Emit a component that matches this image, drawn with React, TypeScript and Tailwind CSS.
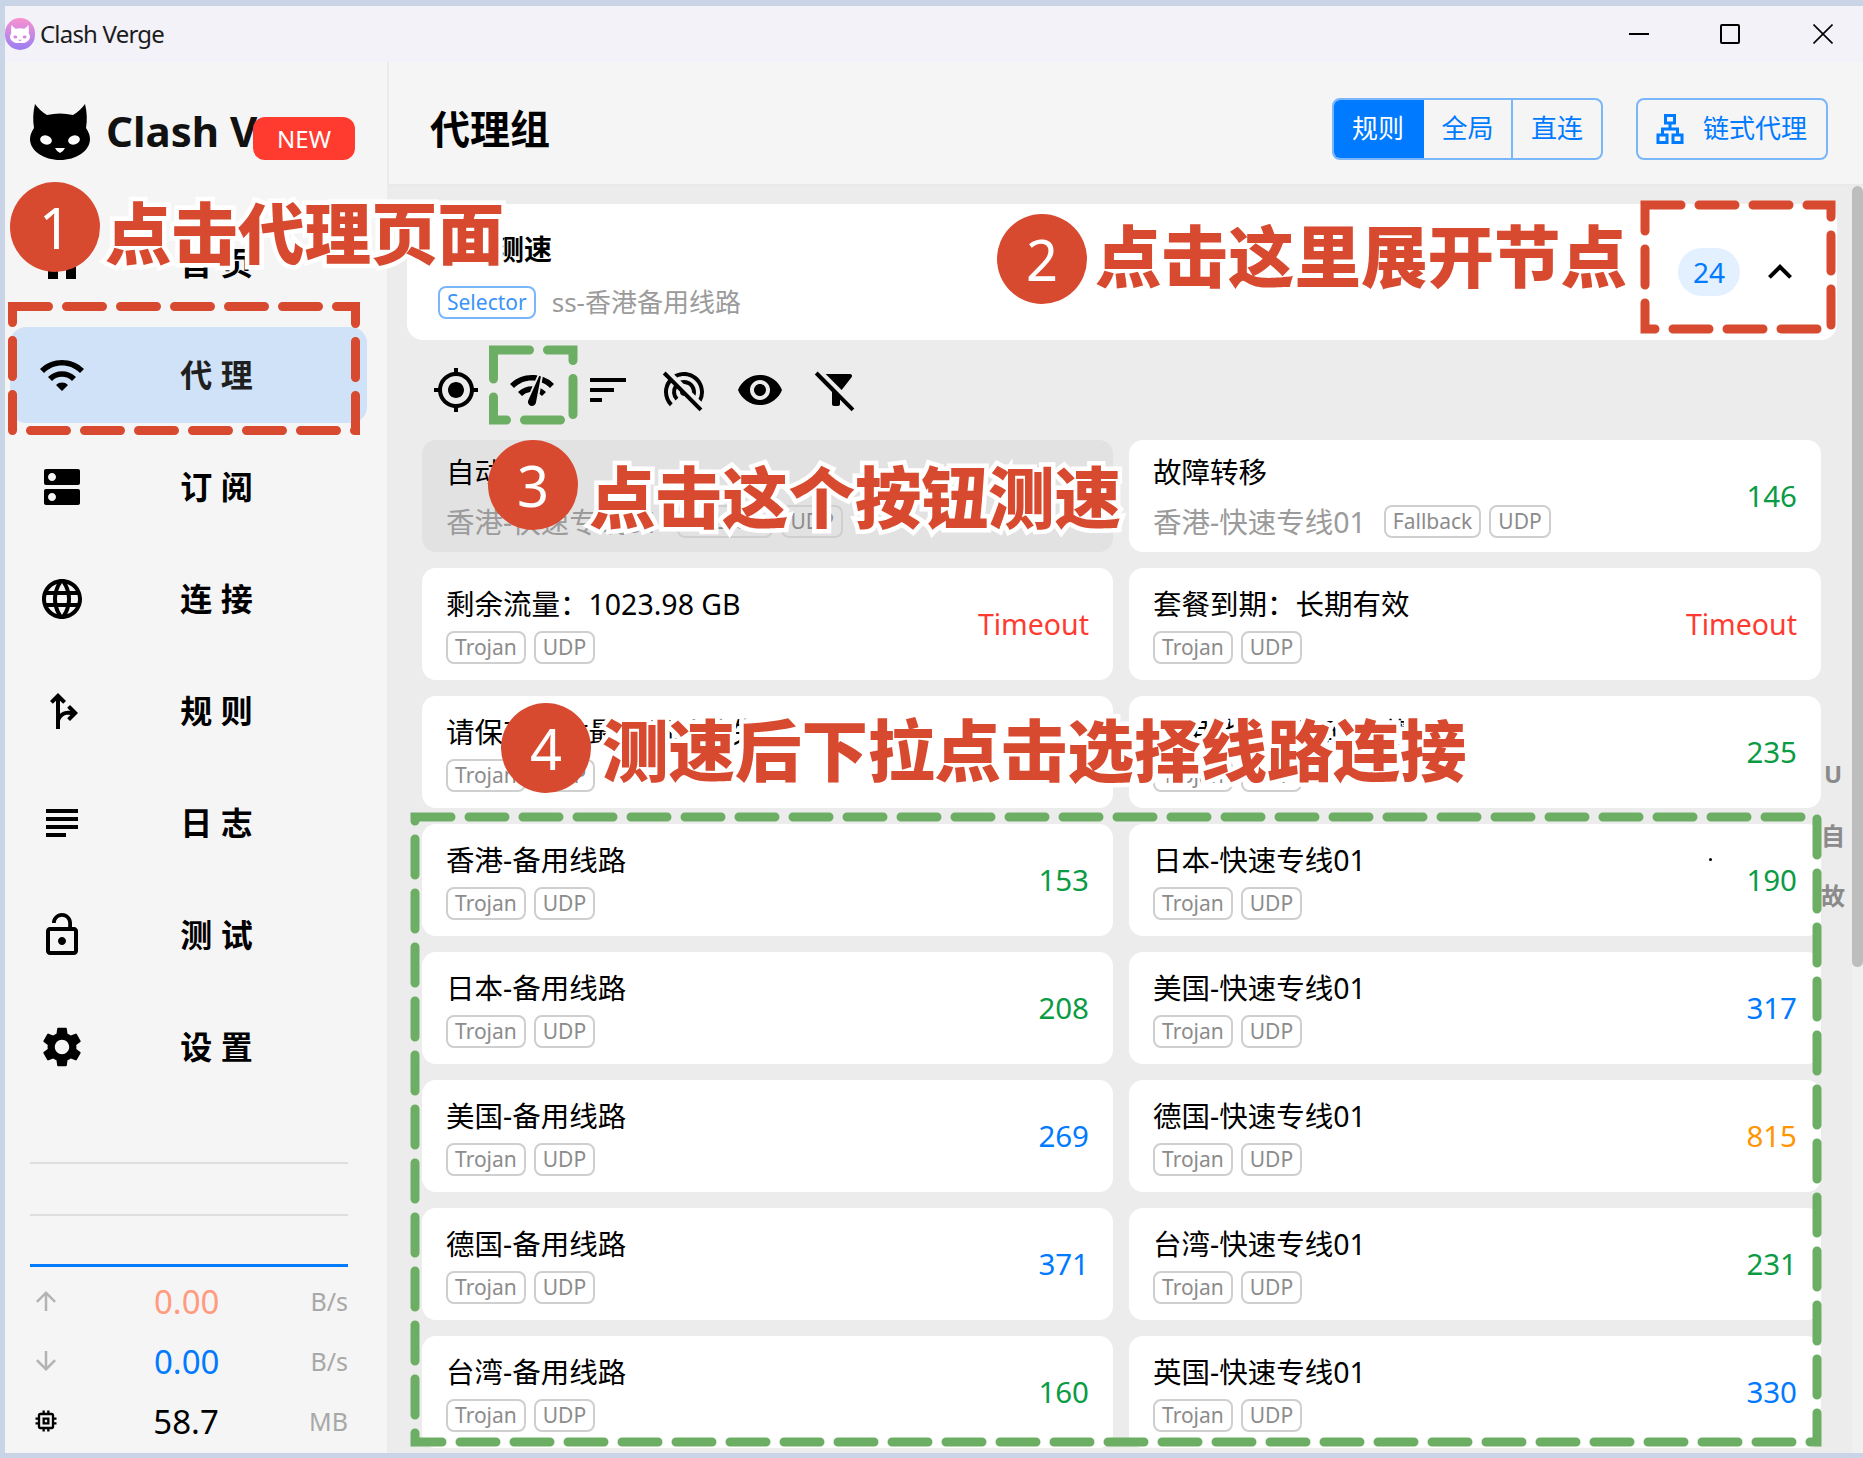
import React from 'react';
import {
  MdArrowDownward,
  MdArrowUpward,
  MdDns,
  MdExpandLess,
  MdFilterAltOff,
  MdForkRight,
  MdHome,
  MdLanguage,
  MdLockOpen,
  MdMemory,
  MdMyLocation,
  MdNetworkCheck,
  MdOutlineLan,
  MdSettings,
  MdSort,
  MdSubject,
  MdVisibility,
  MdWifi,
  MdWifiTetheringOff,
} from 'react-icons/md';

const GREEN = 'text-[#0a9b44]';
const BLUE = 'text-[#007aff]';
const ORANGE = 'text-[#ff9500]';
const RED = 'text-[#ff3b30]';

const navItems = [
  { label: '首 页', Icon: MdHome },
  { label: '代 理', Icon: MdWifi, active: true },
  { label: '订 阅', Icon: MdDns },
  { label: '连 接', Icon: MdLanguage },
  { label: '规 则', Icon: MdForkRight },
  { label: '日 志', Icon: MdSubject },
  { label: '测 试', Icon: MdLockOpen },
  { label: '设 置', Icon: MdSettings },
];

const toolIcons = [MdMyLocation, MdNetworkCheck, MdSort, MdWifiTetheringOff, MdVisibility, MdFilterAltOff];

type Node = {
  title: string;
  delay?: string;
  color?: string;
  sub?: string;
  proto?: string;
  hover?: boolean;
};

const nodes: Node[] = [
  { title: '自动选择', sub: '香港-快速专线01', proto: 'URLTest', hover: true },
  { title: '故障转移', sub: '香港-快速专线01', proto: 'Fallback', delay: '146', color: GREEN },
  { title: '剩余流量：1023.98 GB', delay: 'Timeout', color: RED },
  { title: '套餐到期：长期有效', delay: 'Timeout', color: RED },
  { title: '请保存本站最新网址防失联' },
  { title: '备用地址请及时收藏', delay: '235', color: GREEN },
  { title: '香港-备用线路', delay: '153', color: GREEN },
  { title: '日本-快速专线01', delay: '190', color: GREEN },
  { title: '日本-备用线路', delay: '208', color: GREEN },
  { title: '美国-快速专线01', delay: '317', color: BLUE },
  { title: '美国-备用线路', delay: '269', color: BLUE },
  { title: '德国-快速专线01', delay: '815', color: ORANGE },
  { title: '德国-备用线路', delay: '371', color: BLUE },
  { title: '台湾-快速专线01', delay: '231', color: GREEN },
  { title: '台湾-备用线路', delay: '160', color: GREEN },
  { title: '英国-快速专线01', delay: '330', color: BLUE },
];

const CatHead = ({ className = '', eye = '#fff' }: { className?: string; eye?: string }) => (
  <svg viewBox="0 0 60 56" className={className}>
    <path
      d="M5 0 Q10 7 17 11 Q30 8 43 11 Q50 7 55 0 Q58 12 56 24 Q60 30 60 35 C60 47 46 56 30 56 C14 56 0 47 0 35 Q0 30 4 24 Q2 12 5 0Z"
      fill="currentColor"
    />
    <ellipse cx="16" cy="36" rx="6" ry="4.5" transform="rotate(18 16 36)" fill={eye} />
    <ellipse cx="44" cy="36" rx="6" ry="4.5" transform="rotate(-18 44 36)" fill={eye} />
    <path d="M25 44 H35 Q33 48 30 49 Q27 48 25 44Z" fill={eye} />
  </svg>
);

const Tag = ({ children }: { children: React.ReactNode }) => (
  <span className="h-[33px] px-[7px] flex items-center border-2 border-[#cfcfcf] rounded-[8px] text-[21px] leading-none text-[#8c8c8c]">
    {children}
  </span>
);

const NodeCard = ({ node }: { node: Node }) => (
  <div
    className={`h-[112px] rounded-[14px] pl-[24px] pr-[24px] flex items-center justify-between ${
      node.hover ? 'bg-[#e2e2e2]' : 'bg-white'
    }`}
  >
    {node.sub ? (
      <div className="flex flex-col">
        <div className="text-[28.5px] leading-[38px] text-black">{node.title}</div>
        <div className="flex items-center mt-[13px]">
          <span className="text-[28.5px] leading-[36px] text-[#9b9b9b] mr-[18px]">{node.sub}</span>
          <div className="flex gap-[8px]">
            <Tag>{node.proto}</Tag>
            <Tag>UDP</Tag>
          </div>
        </div>
      </div>
    ) : (
      <div className="flex flex-col">
        <div className="text-[28.5px] leading-[38px] text-black">{node.title}</div>
        <div className="flex gap-[8px] mt-[8px]">
          <Tag>Trojan</Tag>
          <Tag>UDP</Tag>
        </div>
      </div>
    )}
    {node.delay && (
      <span className={`leading-none ${node.delay === 'Timeout' ? 'text-[28.5px]' : 'text-[29.5px]'} ${node.color}`}>
        {node.delay}
      </span>
    )}
  </div>
);

const Stat = ({
  icon,
  value,
  unit,
  color,
}: {
  icon: React.ReactNode;
  value: string;
  unit: string;
  color: string;
}) => (
  <div className="h-[60px] flex items-center">
    <div className="w-[34px] flex justify-center -ml-[1px]">{icon}</div>
    <div className={`flex-1 text-center text-[33px] leading-none ${color}`}>{value}</div>
    <div className="text-[25px] leading-none text-[#a8a8a8]">{unit}</div>
  </div>
);

const Step = ({ n, x, y }: { n: string; x: string; y: string }) => (
  <div className={`absolute ${x} ${y} w-[90px] h-[90px] rounded-full bg-[#d84a2f] text-white text-[56px] flex items-center justify-center`}>
    {n}
  </div>
);

const Note = ({ text, x, y }: { text: string; x: string; y: string }) => (
  <div
    className={`absolute ${x} ${y} whitespace-nowrap text-[66.5px] leading-[66px] font-black text-[#d84a2f] [-webkit-text-stroke:9px_#fff] [paint-order:stroke_fill]`}
  >
    {text}
  </div>
);

export default function App() {
  return (
    <div className="relative w-[1863px] h-[1458px] overflow-hidden flex flex-col pt-[6px] pl-[5px] pb-[5px] bg-[#c9d5e6] font-['Noto_Sans','Noto_Sans_CJK_SC',sans-serif]">
      <div className="h-[56px] bg-[#f2f2f8] flex items-center shrink-0">
        <div className="w-[30px] h-[32px] rounded-full bg-gradient-to-b from-[#f990cf] to-[#9a7cf4] flex items-center justify-center text-white">
          <CatHead className="w-[20px]" eye="#d88ae0" />
        </div>
        <span className="ml-[5px] text-[24px] tracking-[-0.8px] text-[#1c1c1c]">Clash Verge</span>
        <div className="ml-auto flex items-center pr-[30px]">
          <div className="w-[20px] h-[2px] bg-black" />
          <div className="ml-[71px] w-[20px] h-[20px] border-2 border-black rounded-[2px]" />
          <svg viewBox="0 0 20 20" className="ml-[73px] w-[20px] h-[20px]">
            <path d="M0.5 0.5 L19.5 19.5 M19.5 0.5 L0.5 19.5" stroke="#000" strokeWidth="1.6" />
          </svg>
        </div>
      </div>

      <div className="flex flex-1 min-h-0">
        <aside className="w-[384px] shrink-0 bg-[#f5f5f5] border-r-2 border-[#ebebeb] flex flex-col">
          <div className="h-[153px] shrink-0 flex items-start pt-[42px] pl-[25px]">
            <CatHead className="w-[60px] h-[56px] text-black" />
            <div className="relative w-[265px] h-[56px] ml-[16px] overflow-hidden">
              <span className="absolute left-0 top-[-3px] text-[42px] leading-[60px] font-bold text-[#111] whitespace-nowrap">
                Clash Verge
              </span>
              <span className="absolute left-[147px] top-[13px] w-[102px] h-[43px] rounded-[12px] bg-[#ff3b30] text-white text-[24px] flex items-center justify-center">
                NEW
              </span>
            </div>
          </div>
          <nav className="flex flex-col gap-[16px] pl-[5px]">
            {navItems.map(({ label, Icon, active }) => (
              <div
                key={label}
                className={`w-[357px] h-[96px] rounded-[16px] flex items-center pl-[28px] pr-[20px] ${
                  active ? 'bg-[#cfe2f7]' : ''
                }`}
              >
                <Icon className="w-[48px] h-[48px] text-black" />
                <span className={`flex-1 text-center text-[32px] font-bold ${active ? 'text-[#1f1f1f]' : 'text-black'}`}>
                  {label}
                </span>
              </div>
            ))}
          </nav>
          <div className="mt-auto pl-[25px] pr-[39px] pb-[2px]">
            <div className="h-[2px] bg-[#dedede]" />
            <div className="h-[2px] bg-[#dedede] mt-[50px]" />
            <div className="h-[3px] bg-[#007aff] mt-[48px] mb-[4px]" />
            <Stat icon={<MdArrowUpward className="w-[30px] h-[30px] text-[#b3b3b3]" />} value="0.00" unit="B/s" color="text-[#ff9b7f]" />
            <Stat icon={<MdArrowDownward className="w-[30px] h-[30px] text-[#b3b3b3]" />} value="0.00" unit="B/s" color="text-[#007aff]" />
            <Stat icon={<MdMemory className="w-[28px] h-[28px] text-black" />} value="58.7" unit="MB" color="text-black" />
          </div>
        </aside>

        <main className="flex-1 min-w-0 flex flex-col">
          <header className="h-[124px] shrink-0 bg-[#f5f5f5] border-b-2 border-[#e9e9e9] flex items-center pt-[11px] pl-[41px] pr-[35px]">
            <h1 className="text-[40px] font-bold text-black">代理组</h1>
            <div className="ml-auto flex h-[62px] border-2 border-[#7ab6fb] rounded-[8px] overflow-hidden text-[26px] text-[#007aff]">
              <span className="w-[92px] -my-[2px] -ml-[2px] bg-[#007aff] text-white flex items-center justify-center">规则</span>
              <span className="w-[89px] border-r-2 border-[#7ab6fb] flex items-center justify-center">全局</span>
              <span className="w-[88px] flex items-center justify-center">直连</span>
            </div>
            <div className="ml-[33px] w-[192px] h-[62px] border-2 border-[#7ab6fb] rounded-[8px] flex items-center pl-[14px] text-[26px] text-[#007aff]">
              <MdOutlineLan className="w-[36px] h-[36px]" />
              <span className="ml-[15px] whitespace-nowrap">链式代理</span>
            </div>
          </header>

          <div className="relative flex-1 min-h-0 overflow-hidden bg-[#ececec] pt-[18px]">
            <div className="ml-[18px] w-[1430px] h-[136px] bg-white rounded-[16px] flex items-center pl-[31px] pr-[33px]">
              <div className="flex flex-col pt-[3px]">
                <div className="ml-[2px] text-[28px] leading-[40px] font-bold text-black">手动测速</div>
                <div className="flex items-center mt-[17px]">
                  <span className="h-[33px] px-[7px] flex items-center border-2 border-[#7ab6fb] rounded-[8px] text-[21px] leading-none text-[#3a94f7]">
                    Selector
                  </span>
                  <span className="ml-[16px] text-[26px] leading-none text-[#9b9b9b]">ss-香港备用线路</span>
                </div>
              </div>
              <span className="ml-auto w-[62px] h-[48px] rounded-full bg-[#e3f0ff] text-[#007aff] text-[28px] flex items-center justify-center">
                24
              </span>
              <MdExpandLess className="ml-[16px] w-[48px] h-[48px] text-black" />
            </div>

            <div className="h-[100px] flex items-center gap-[28px] pl-[43px]">
              {toolIcons.map((Icon, i) => (
                <Icon key={i} className="w-[48px] h-[48px] text-black" />
              ))}
            </div>

            <div className="ml-[33px] grid grid-cols-[691px_692px] gap-x-[16px] gap-y-[16px]">
              {nodes.map((node) => (
                <NodeCard key={node.title} node={node} />
              ))}
            </div>

            <div className="absolute right-[14px] top-0 bottom-0 w-[32px] text-[24px] font-bold text-[#8a8a8a]">
              <span className="absolute left-0 w-full text-center top-[570px]">U</span>
              <span className="absolute left-0 w-full text-center top-[632px]">自</span>
              <span className="absolute left-0 w-full text-center top-[692px]">故</span>
            </div>
            <div className="absolute right-0 top-0 bottom-0 w-[11px] bg-[#f0f0f0]">
              <div className="h-[781px] bg-[#bdbdbd] rounded-[6px]" />
            </div>
            <div className="absolute left-[1320px] top-[672px] w-[3px] h-[3px] rounded-full bg-black" />
          </div>
        </main>
      </div>

      {/* annotations drawn over the screenshot */}
      <svg className="absolute left-0 top-0 w-[1863px] h-[1458px] pointer-events-none" viewBox="0 0 1863 1458" fill="none" strokeWidth="9" strokeLinecap="round" strokeDasharray="36 18">
        <path d="M12.5 306.5 H355.5 V430.5 H12.5Z" stroke="#d84a2f" />
        <path d="M1645 205 H1831 V329 H1645Z" stroke="#d84a2f" />
        <path d="M493.5 350 H573 V420 H493.5Z" stroke="#6cae63" />
        <path d="M415 817 H1817 V1442 H415Z" stroke="#6cae63" />
      </svg>
      <Step n="1" x="left-[10px]" y="top-[182px]" />
      <Note text="点击代理页面" x="left-[105px]" y="top-[200px]" />
      <Step n="2" x="left-[997px]" y="top-[214px]" />
      <Note text="点击这里展开节点" x="left-[1095px]" y="top-[223px]" />
      <Step n="3" x="left-[488px]" y="top-[440px]" />
      <Note text="点击这个按钮测速" x="left-[589px]" y="top-[464px]" />
      <Step n="4" x="left-[501px]" y="top-[703px]" />
      <Note text="测速后下拉点击选择线路连接" x="left-[602px]" y="top-[717px]" />
    </div>
  );
}
